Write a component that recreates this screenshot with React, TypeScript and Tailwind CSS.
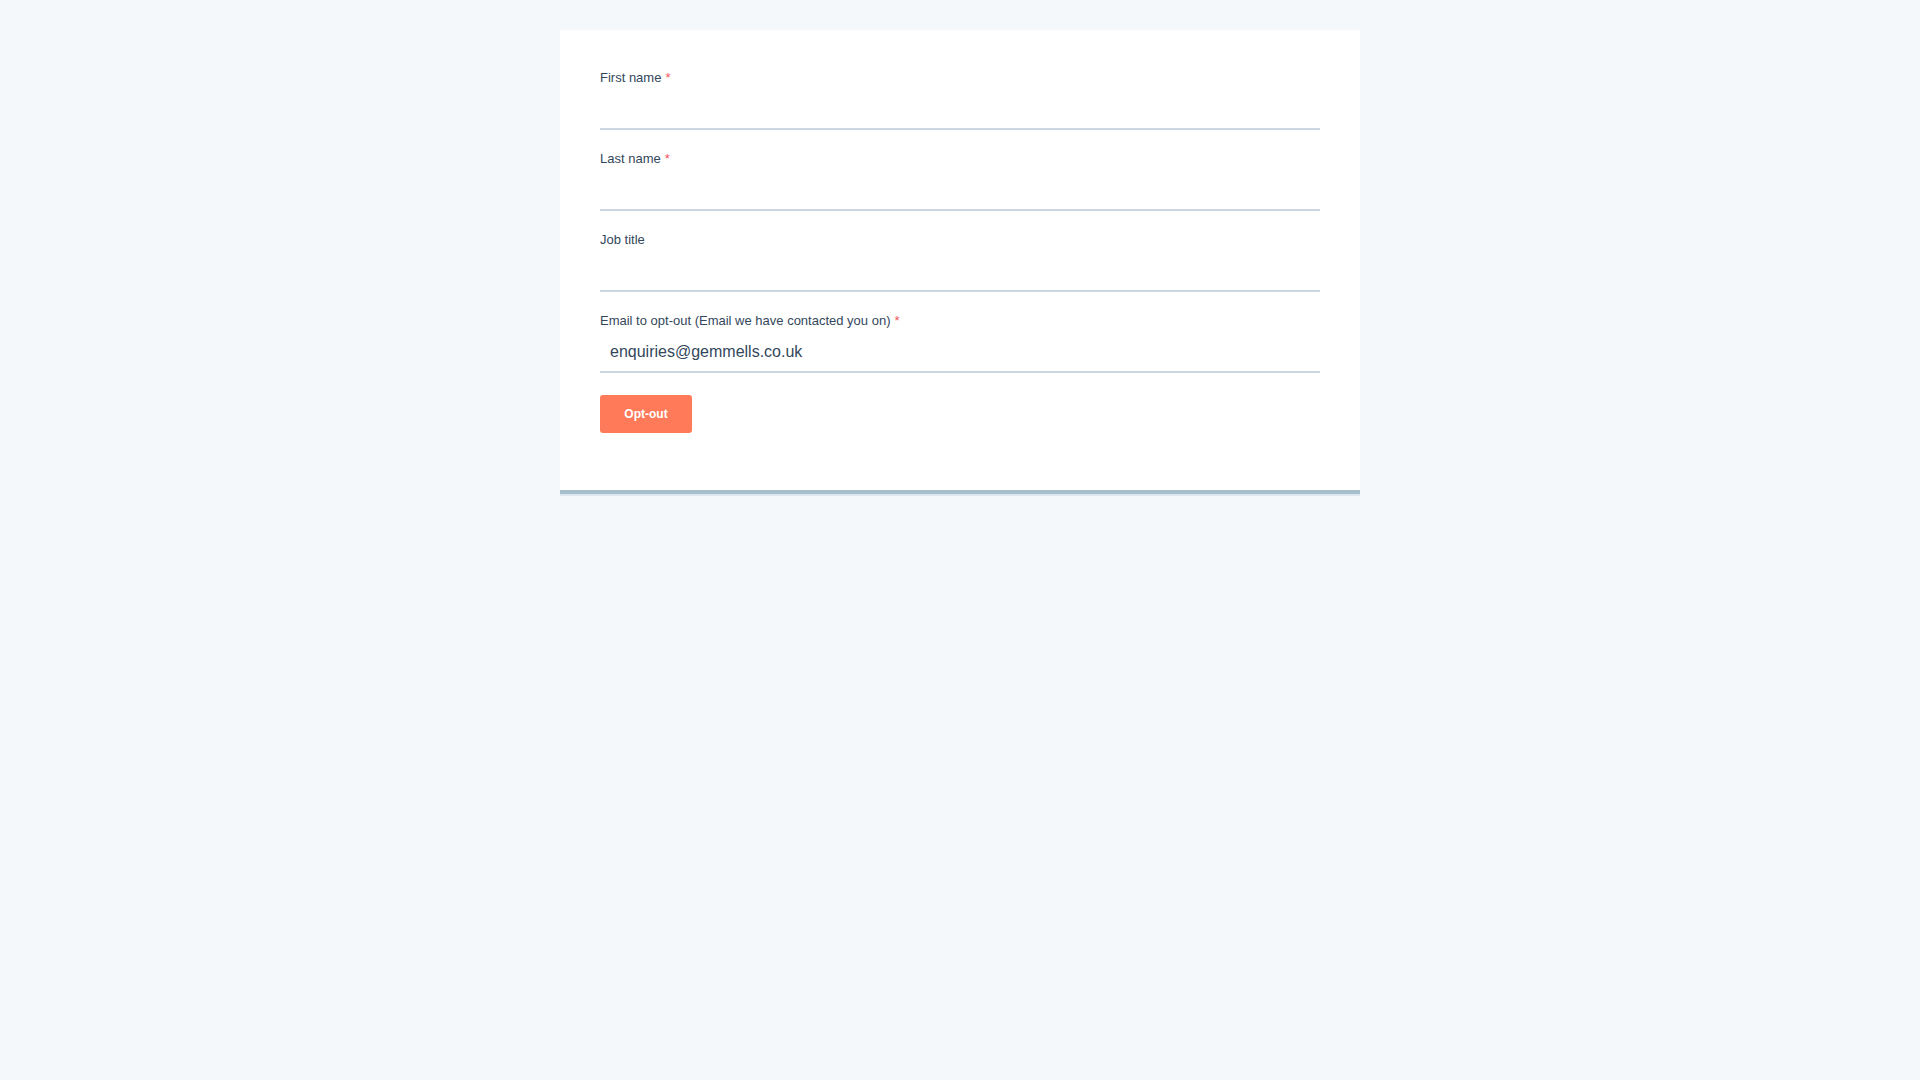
export default function App() {
  return (
    <div className="min-h-[1080px] w-full bg-[#f5f8fa] pt-[30px]" style={{ fontFamily: '"Liberation Sans", Arial, sans-serif' }}>
      <div className="mx-auto w-[800px] bg-white">
        <div className="px-[40px] pt-[38px] pb-[57px]">
          {[
            { label: "First name", req: true, value: "" },
            { label: "Last name", req: true, value: "" },
            { label: "Job title", req: false, value: "" },
            { label: "Email to opt-out (Email we have contacted you on)", req: true, value: "enquiries@gemmells.co.uk" },
          ].map((f, i) => (
            <div key={i} className={i < 3 ? "mb-[19px]" : "mb-[22px]"}>
              <div className="h-[20px] text-[13px] leading-[20px] text-[#33475b]">
                {f.label}
                {f.req && <span className="ml-[4px] text-[#f2545b]">*</span>}
              </div>
              <div className="flex h-[42px] items-center border-b-2 border-[#cbd6e2] px-[10px] pt-[1px] text-[16px] text-[#33475b]">
                {f.value}
              </div>
            </div>
          ))}
          <button className="h-[38px] w-[92px] rounded-[3px] bg-[#ff7a59] text-[12px] font-bold text-white">
            Opt-out
          </button>
        </div>
        <div className="h-[4px] bg-[#a5bfcc]" />
        <div className="h-[2px] bg-[#dfe8ee]" />
      </div>
    </div>
  );
}
